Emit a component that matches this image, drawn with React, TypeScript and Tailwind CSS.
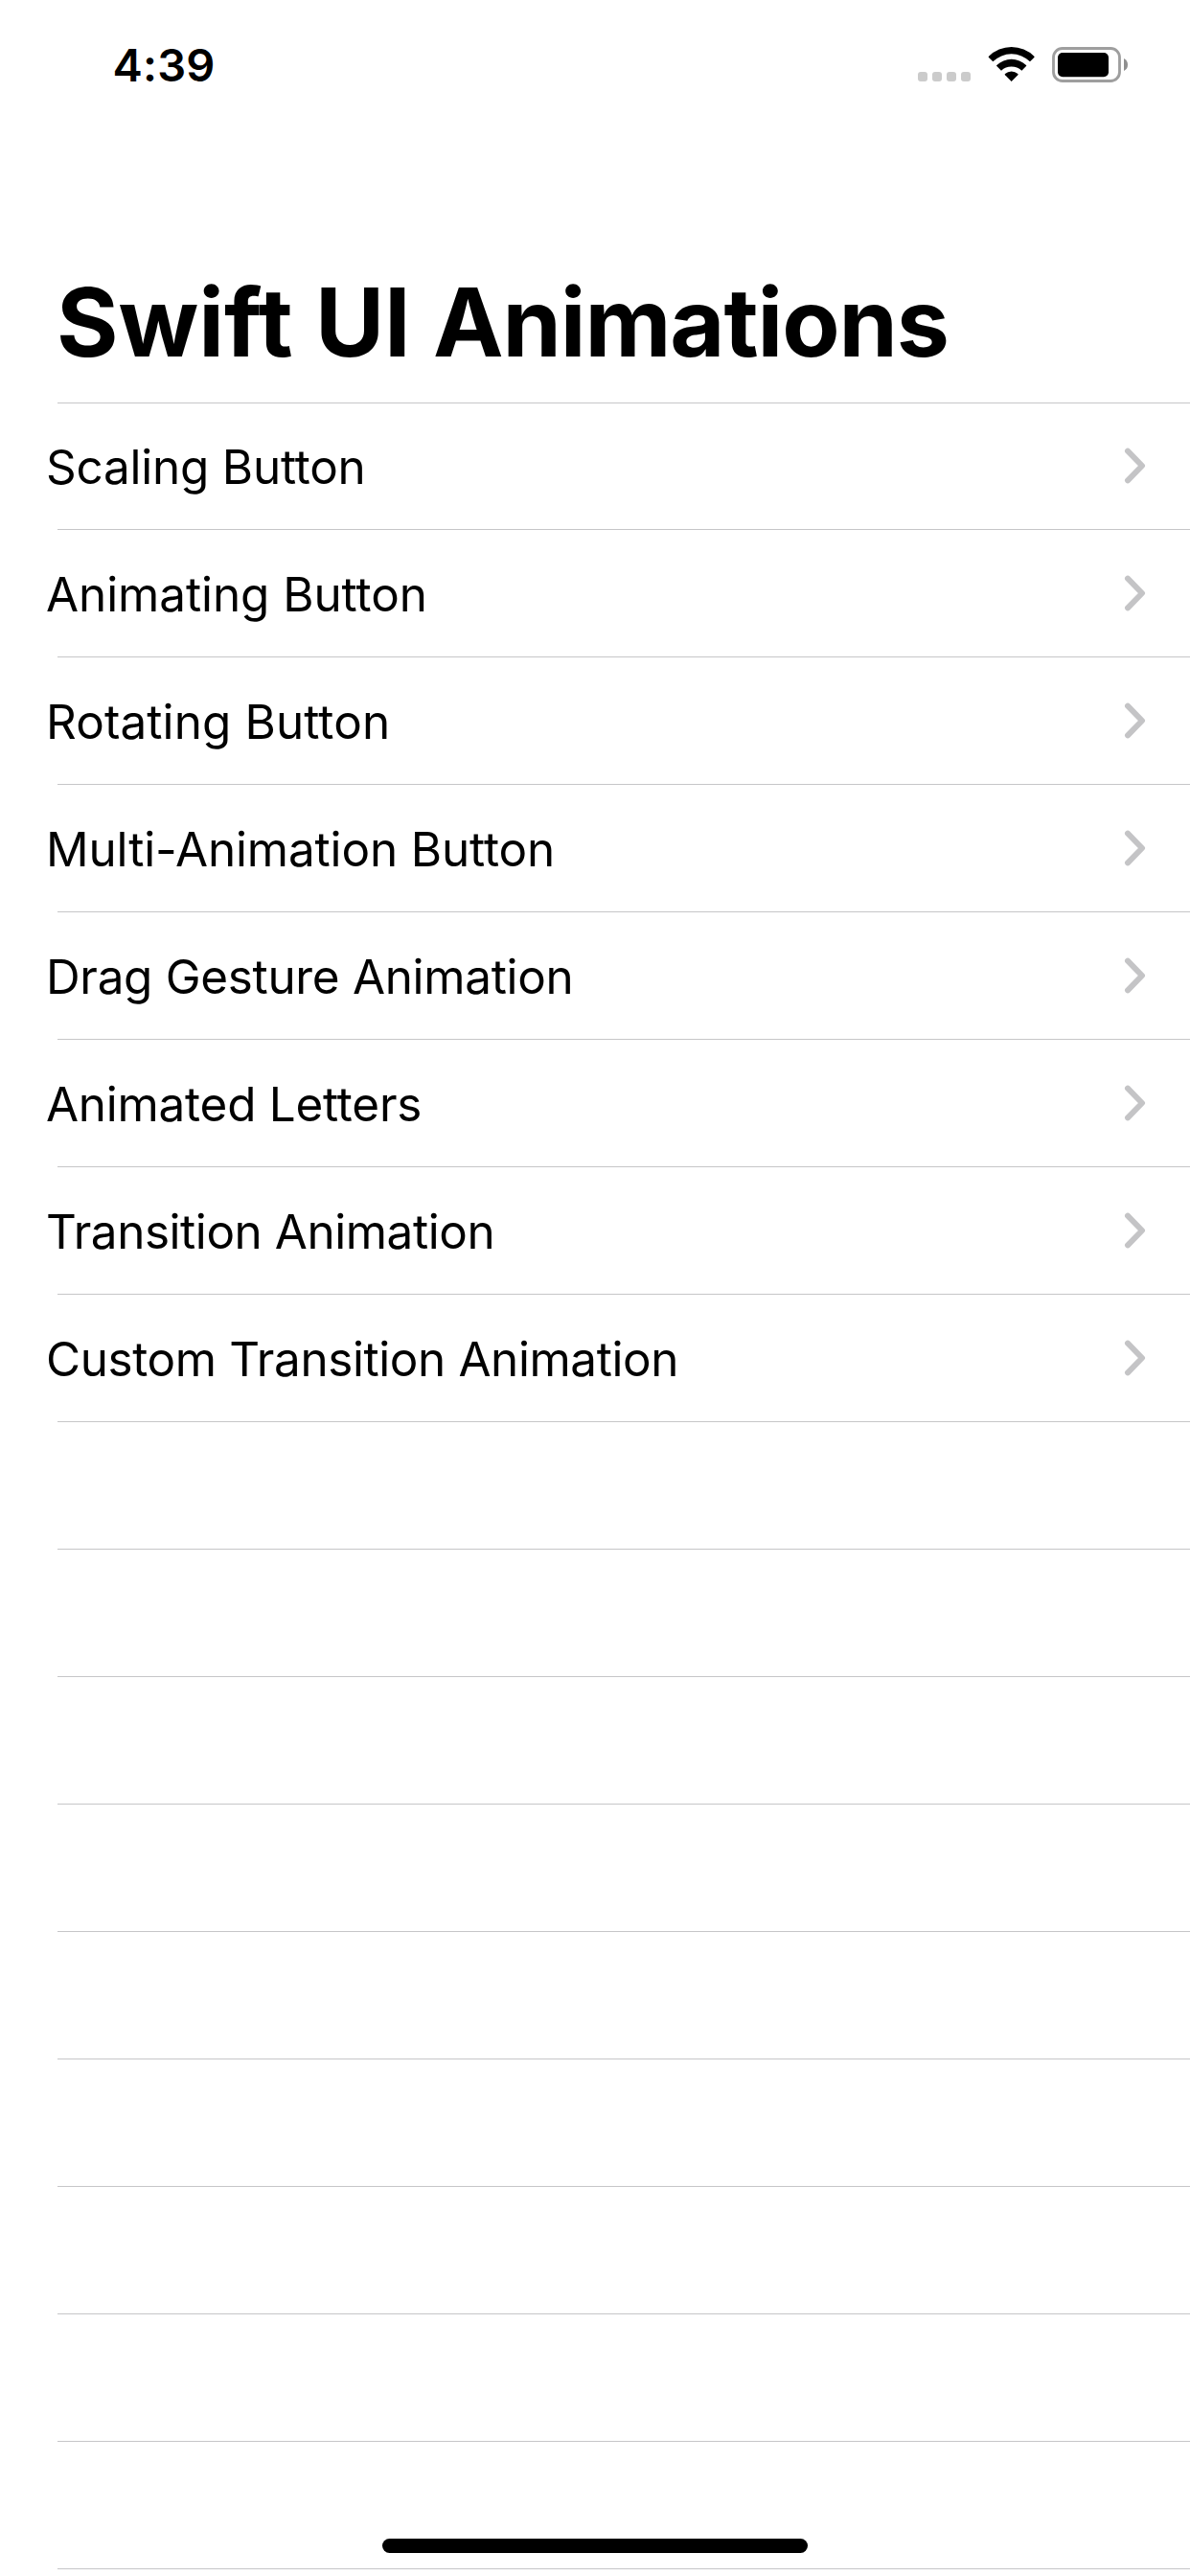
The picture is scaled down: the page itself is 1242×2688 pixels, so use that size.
const items = [
  { label: "Scaling Button", tracking: "tracking-[-0.2px]" },
  { label: "Animating Button", tracking: "tracking-[-0.05px]" },
  { label: "Rotating Button", tracking: "tracking-[0.13px]" },
  { label: "Multi-Animation Button", tracking: "tracking-[-0.12px]" },
  { label: "Drag Gesture Animation", tracking: "tracking-[-0.29px]" },
  { label: "Animated Letters", tracking: "tracking-[-0.22px]" },
  { label: "Transition Animation", tracking: "tracking-[-0.42px]" },
  { label: "Custom Transition Animation", tracking: "tracking-[-0.38px]" },
];

const emptyRows = Array.from({ length: 9 }, (_, i) => i);

function StatusIcons() {
  return (
    <svg className="h-[40px] w-[222px]" viewBox="54 51 666 120" fill="none">
      <g fill="#cbcbcb">
        <rect x="54" y="135" width="30" height="30" rx="9" />
        <rect x="99" y="135" width="30" height="30" rx="9" />
        <rect x="144" y="135" width="30" height="30" rx="9" />
        <rect x="189" y="135" width="30" height="30" rx="9" />
      </g>
      <g fill="#000">
        <path d="M276 90Q274 88 276 86A101 101 0 0 1 418 86Q420 88 418 90L405 103A82 82 0 0 0 289 103Z" />
        <path d="M301 117Q299 115 301 114A66 66 0 0 1 393 114Q395 115 393 117L379 131A47 47 0 0 0 315 131Z" />
        <path d="M327 145Q325 143 327 141A30 30 0 0 1 367 141Q369 143 367 145L347 165Z" />
      </g>
      <rect x="478.500" y="61.500" width="207" height="102" rx="28" stroke="#9e9e9e" strokeWidth="8.500" />
      <rect x="492" y="75" width="159" height="75.500" rx="15" fill="#000" />
      <path d="M699 93Q711 99 711 112.500Q711 126 699 132Z" fill="#8f8f8f" />
    </svg>
  );
}

function Chevron() {
  return (
    <svg className="h-[40px] w-[24px]" viewBox="0 0 24 40" fill="none">
      <path d="M5 4.700L20 20L5 35.300" stroke="#c4c4c6" strokeWidth="6" strokeLinecap="round" strokeLinejoin="round" />
    </svg>
  );
}

export default function App() {
  return (
    <div className="relative flex h-[2688px] w-[1242px] flex-col overflow-hidden bg-white text-black [font-family:Inter,'Liberation_Sans',sans-serif]">
      <header className="flex h-[132px] shrink-0 items-start justify-between pr-[62px] pl-[117.5px]">
        <span className="mt-[39px] text-[47px] leading-[57px] font-semibold tracking-[0.2px]">4:39</span>
        <span className="mt-[47px]">
          <StatusIcons />
        </span>
      </header>
      <h1 className="h-[288px] shrink-0 pt-[144px] pl-[59px] text-[98.6px] leading-[120px] font-bold whitespace-nowrap">
        Swift UI <span className="tracking-[-1.1px]">Animations</span>
      </h1>
      <ul className="flex shrink-0 flex-col">
        <li className="-mb-px ml-[60px] h-px bg-[#c6c6c8]" />
        {items.map(({ label, tracking }) => (
          <li key={label} className="flex h-[133px] flex-col">
            <div className="flex h-[132px] items-center justify-between pr-[46px] pl-[48px]">
              <span className={`mt-[2px] text-[49.4px] leading-[60px] whitespace-nowrap ${tracking}`}>{label}</span>
              <Chevron />
            </div>
            <div className="ml-[60px] h-px shrink-0 bg-[#c6c6c8]" />
          </li>
        ))}
        {emptyRows.map((i) => (
          <li key={i} className="ml-[60px] h-[133px] border-b border-[#c6c6c8]" />
        ))}
      </ul>
      <div className="absolute top-[2649px] left-[399px] h-[15px] w-[444px] rounded-full bg-black" />
    </div>
  );
}
